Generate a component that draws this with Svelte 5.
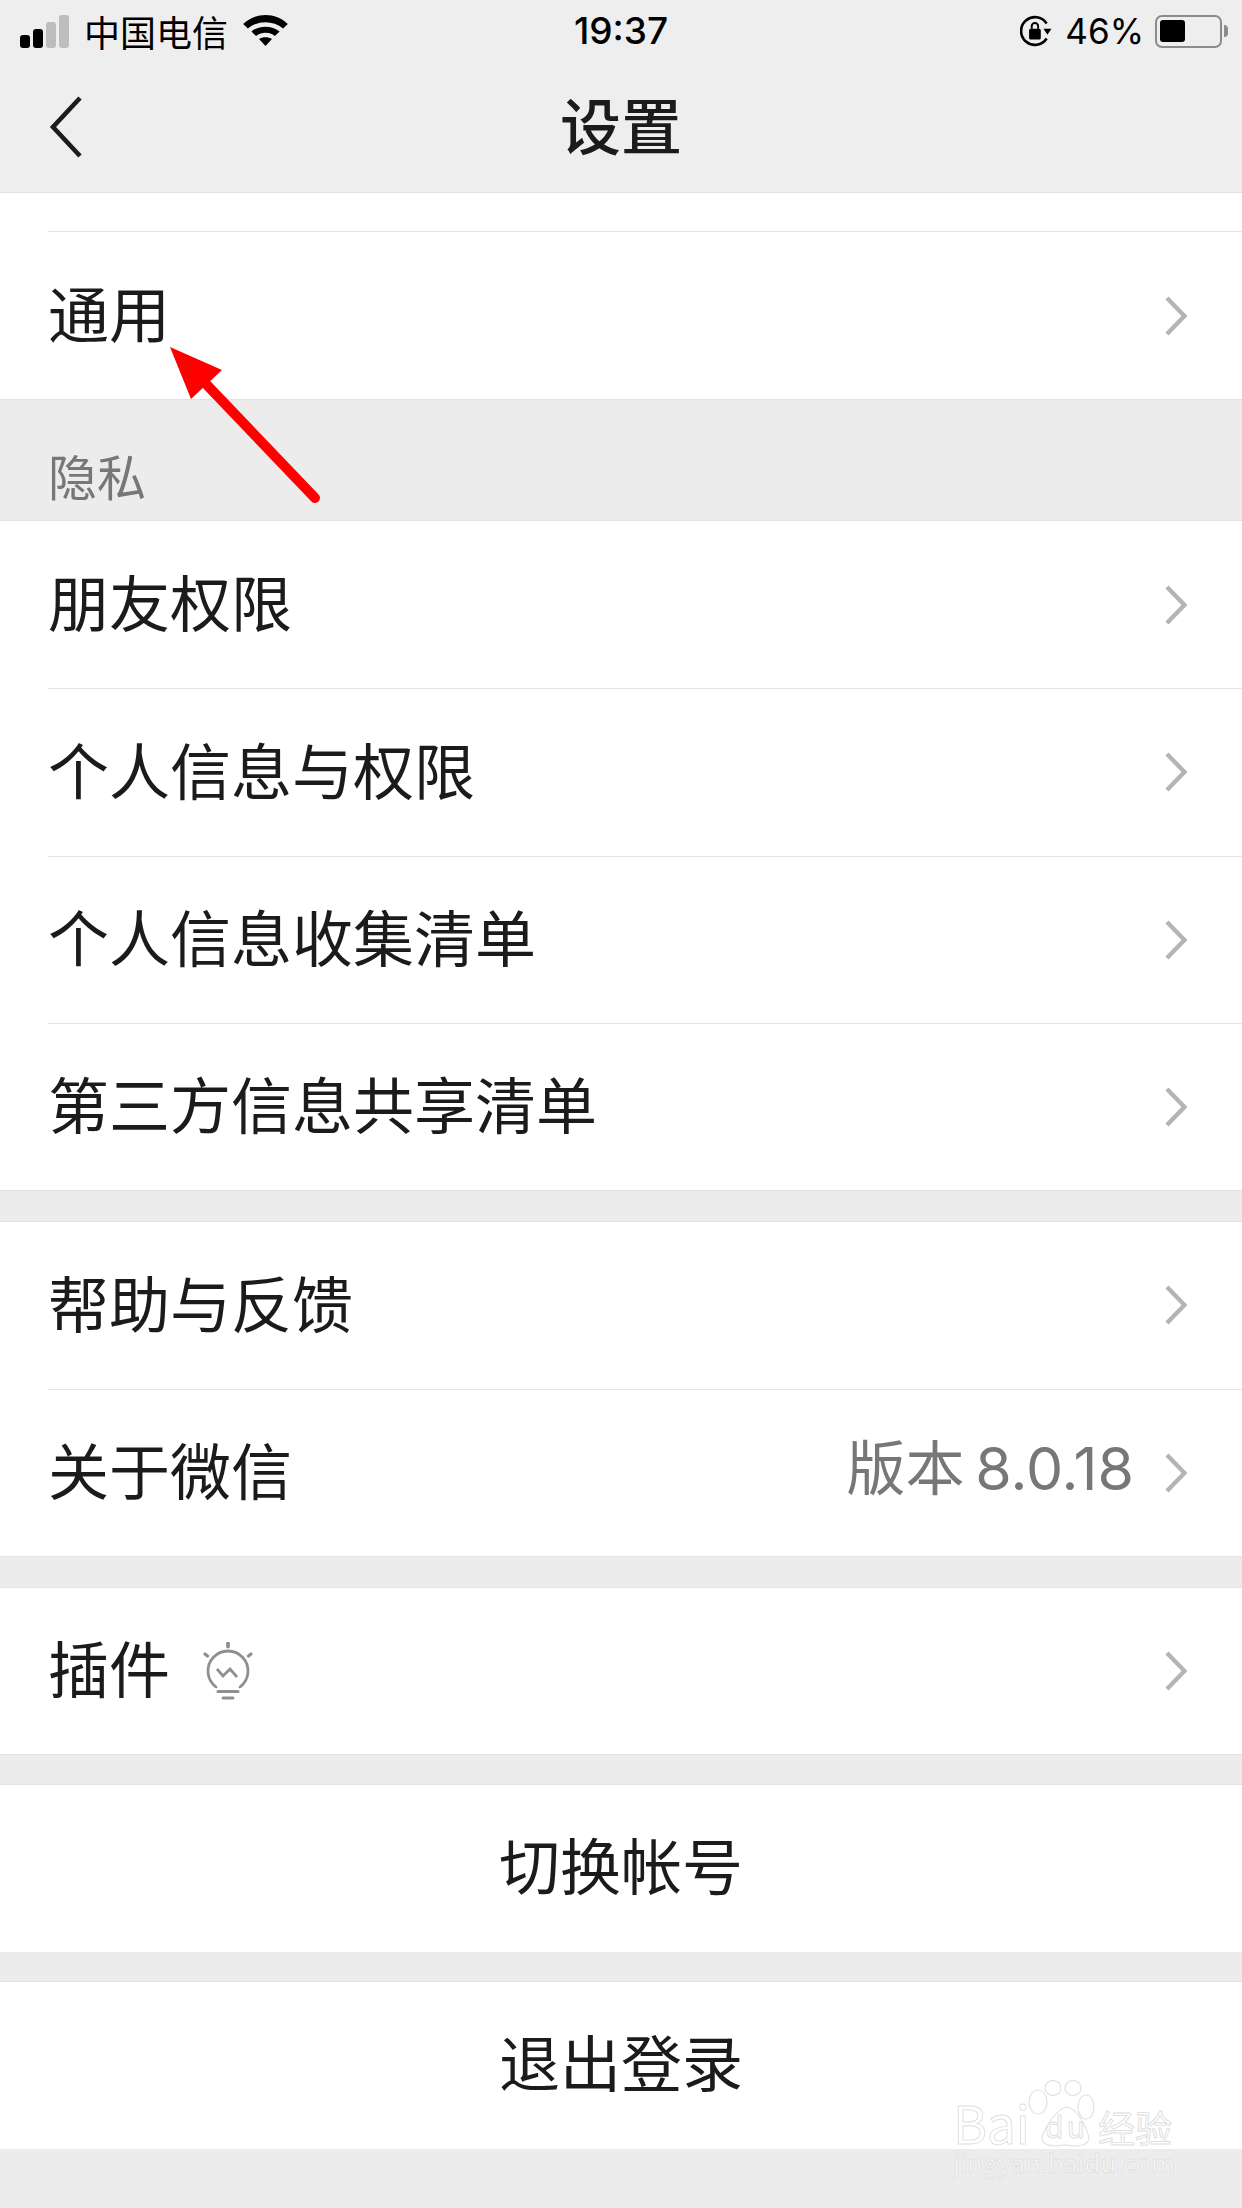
<script>
  const privacy = ['朋友权限', '个人信息与权限', '个人信息收集清单', '第三方信息共享清单'];
</script>

{#snippet chevron()}
  <svg class="chevron" width="22" height="40" viewBox="0 0 22 40">
    <path d="M2 2 L19.5 20 L2 38" fill="none" stroke="#b4b4b4" stroke-width="4.4" />
  </svg>
{/snippet}

<div class="page">
  <header class="top">
    <div class="status">
      <div class="status-left">
        <div class="signal">
          <i class="on s1"></i><i class="on s2"></i><i class="s3"></i><i class="s4"></i>
        </div>
        <span class="carrier">中国电信</span>
        <svg class="wifi" width="47" height="34" viewBox="0 0 40 34" preserveAspectRatio="none">
          <path d="M1 11 C11.5 -1 28.5 -1 39 11 L35 15.5 C26.5 7 13.5 7 5 15.5 Z" />
          <path d="M8 18.5 C14.5 12 25.5 12 32 18.5 L28 23 C23.5 18.8 16.5 18.8 12 23 Z" />
          <path d="M14.5 26 C17.5 23.8 22.5 23.8 25.5 26 L20 33 Z" />
        </svg>
      </div>
      <div class="time">19:37</div>
      <div class="status-right">
        <svg class="lock" width="32" height="32" viewBox="0 0 30 30">
          <path d="M25 8 A13 13 0 1 0 25 22" fill="none" stroke="#000" stroke-width="2.4" />
          <path d="M22 13 L29.5 13 L25.7 18.5 Z" />
          <rect x="8.5" y="13" width="11" height="10" rx="1.5" />
          <path d="M11 13 V10.5 A3 3 0 0 1 17 10.5 V13" fill="none" stroke="#000" stroke-width="1.8" />
        </svg>
        <span class="percent">46%</span>
        <div class="battery"><div class="level"></div></div>
        <div class="nub"></div>
      </div>
    </div>
    <div class="nav">
      <svg class="back" width="36" height="62" viewBox="0 0 36 62">
        <path d="M31 2 L4 31 L31 60" fill="none" stroke="#1c1c1c" stroke-width="4.6" />
      </svg>
      <h1>设置</h1>
    </div>
  </header>

  <div class="stub"></div>

  <section class="group first">
    <div class="row"><span>通用</span>{@render chevron()}</div>
  </section>

  <div class="label">隐私</div>

  <section class="group">
    {#each privacy as item}
      <div class="row"><span>{item}</span>{@render chevron()}</div>
    {/each}
  </section>

  <div class="gap"></div>

  <section class="group">
    <div class="row"><span>帮助与反馈</span>{@render chevron()}</div>
    <div class="row">
      <span>关于微信</span>
      <span class="value">版本 8.0.18</span>
      {@render chevron()}
    </div>
  </section>

  <div class="gap"></div>

  <section class="group">
    <div class="row single">
      <span>插件</span>
      <svg class="bulb" width="50" height="60" viewBox="0 0 50 60">
        <g fill="none" stroke="#8f8f8f" stroke-linecap="round">
          <path d="M25 1.5 V4.5" stroke-width="3.8" />
          <path d="M2 12 L4.5 14 M48 12 L45.5 14" stroke-width="3.2" />
          <path d="M13 45 A20 20 0 1 1 37 45" stroke-width="2.8" />
          <path d="M14 27 L20 34 L27 27 L34 35" stroke-width="2.8" stroke-linecap="butt" />
          <path d="M15 49.5 H35" stroke-width="3" />
          <path d="M20 56 H30" stroke-width="3" />
        </g>
      </svg>
      {@render chevron()}
    </div>
  </section>

  <div class="gap"></div>
  <button class="action">切换帐号</button>
  <div class="gap"></div>
  <button class="action">退出登录</button>

  <!-- arrow and watermark are pasted over the screenshot -->
  <svg class="arrow" width="160" height="160" viewBox="0 0 160 160">
    <path d="M145 151 L37 38" fill="none" stroke="#fe0000" stroke-width="10" stroke-linecap="round" />
    <path d="M0 0 L52 23 L21 52 Z" fill="#fe0000" />
  </svg>

  <svg class="mark" width="240" height="110" viewBox="0 0 240 110">
    <g fill="#fff" stroke="#e2e2e2" stroke-width="1.2">
      <ellipse cx="88" cy="22" rx="9" ry="12" />
      <ellipse cx="103" cy="8" rx="8" ry="7.5" />
      <ellipse cx="123" cy="8" rx="8" ry="7.5" />
      <ellipse cx="136" cy="27" rx="8" ry="12" />
      <path d="M117 27 C128 28 137 50 139 57 C139 68 124 66 116 65 C106 66 92 68 92 57 C94 50 106 28 117 27 Z" />
    </g>
    <g class="mark-text">
      <text x="3" y="64" font-size="52" textLength="77">Bai</text>
      <text x="95" y="58" font-size="30" textLength="40">du</text>
      <text x="148" y="63" font-size="37">经验</text>
      <text class="url" x="3" y="93" font-size="26" textLength="222">jingyan.baidu.com</text>
    </g>
  </svg>
</div>

<style>
  :global(body) {
    margin: 0;
    background: #ececec;
  }

  .page {
    position: relative;
    width: 1242px;
    height: 2208px;
    overflow: hidden;
    background: #ececec;
    color: #1b1b1b;
    font-family: "Noto Sans CJK SC", "Noto Sans", sans-serif;
  }

  .top {
    height: 192px;
    background: #eeeeee;
    border-bottom: 1px solid #e0e0e0;
  }

  .status {
    height: 62px;
    display: flex;
    align-items: center;
    justify-content: space-between;
    padding: 0 14px 0 20px;
    position: relative;
    color: #000;
  }

  .status-left, .status-right {
    display: flex;
    align-items: center;
  }

  .signal {
    display: flex;
    align-items: flex-end;
    gap: 3px;
    height: 33px;
  }

  .signal i {
    display: block;
    width: 10px;
    border-radius: 3px;
    background: #bdbdbd;
  }

  .signal .on { background: #000; }
  .s1 { height: 13px; }
  .s2 { height: 19px; }
  .s3 { height: 26px; }
  .s4 { height: 33px; }

  .carrier {
    font-size: 36px;
    line-height: 42px;
    margin-left: 15px;
  }

  .wifi {
    margin-left: 14px;
    margin-top: -2px;
  }

  .time {
    position: absolute;
    left: 0;
    right: 0;
    text-align: center;
    font-family: Inter, "Liberation Sans", sans-serif;
    font-size: 37px;
    font-weight: 500;
    top: 11px;
    line-height: 40px;
  }

  .lock { margin-right: 13px; }

  .percent {
    font-family: Inter, "Liberation Sans", sans-serif;
    font-size: 35px;
    line-height: 40px;
    margin-right: 11px;
  }

  .battery {
    box-sizing: border-box;
    width: 67px;
    height: 33px;
    border: 2.5px solid #8b8b8b;
    border-radius: 7px;
    padding: 3px;
  }

  .level {
    width: 25px;
    height: 22px;
    border-radius: 3px;
    background: #000;
  }

  .nub {
    width: 4px;
    height: 12px;
    margin-left: 2px;
    background: #8b8b8b;
    border-radius: 0 4px 4px 0;
  }

  .nav {
    position: relative;
    height: 130px;
    display: flex;
    align-items: center;
    justify-content: center;
  }

  .back {
    position: absolute;
    left: 49px;
    top: 34px;
  }

  h1 {
    margin: 0 0 7px;
    font-size: 61px;
    font-weight: 500;
    line-height: 76px;
    color: #1b1b1b;
  }

  .stub {
    height: 38px;
    background: #fff;
  }

  .group {
    background: #fff;
    border-bottom: 1px solid #e2e2e2;
  }

  .row {
    box-sizing: border-box;
    margin-left: 48px;
    padding-right: 55px;
    height: 167.25px;
    border-top: 1px solid #e4e4e4;
    display: flex;
    align-items: center;
    font-size: 61px;
    line-height: 76px;
  }

  .row > span { margin-bottom: 7px; }
  .row > span:first-child { margin-right: auto; }
  .row.single { height: 166px; }
  .row.single > span:first-child { margin-right: 33px; }
  .row.single .chevron { margin-left: auto; }

  .group:not(.first) .row:first-child { border-top: 0; }
  .group.first .row { height: 168px; }

  .value {
    color: #777777;
    font-family: Inter, "Noto Sans CJK SC", sans-serif;
    font-size: 59px;
    word-spacing: -6px;
    margin-right: 31px;
  }

  .bulb { margin-top: 2px; }

  .label {
    box-sizing: border-box;
    height: 121px;
    padding: 44px 0 0 48px;
    font-size: 49px;
    line-height: 62px;
    color: #777777;
    border-bottom: 1px solid #e2e2e2;
  }

  .gap {
    box-sizing: border-box;
    height: 30.5px;
    border-bottom: 1px solid #e2e2e2;
  }

  .action {
    display: block;
    width: 100%;
    height: 166.5px;
    padding: 0 0 8px;
    border: 0;
    background: #fff;
    color: #1b1b1b;
    font: inherit;
    font-size: 61px;
    line-height: 76px;
  }

  .arrow {
    position: absolute;
    left: 170px;
    top: 347px;
  }

  .mark {
    position: absolute;
    left: 950px;
    top: 2080px;
  }

  .mark-text text {
    font-family: "Noto Sans CJK SC", "Noto Sans", sans-serif;
    fill: #fff;
    stroke: #dedede;
    stroke-width: 0.9;
  }

  .mark-text .url {
    fill: #f6f6f6;
    stroke: #d6d6d6;
    stroke-width: 0.5;
  }
</style>
